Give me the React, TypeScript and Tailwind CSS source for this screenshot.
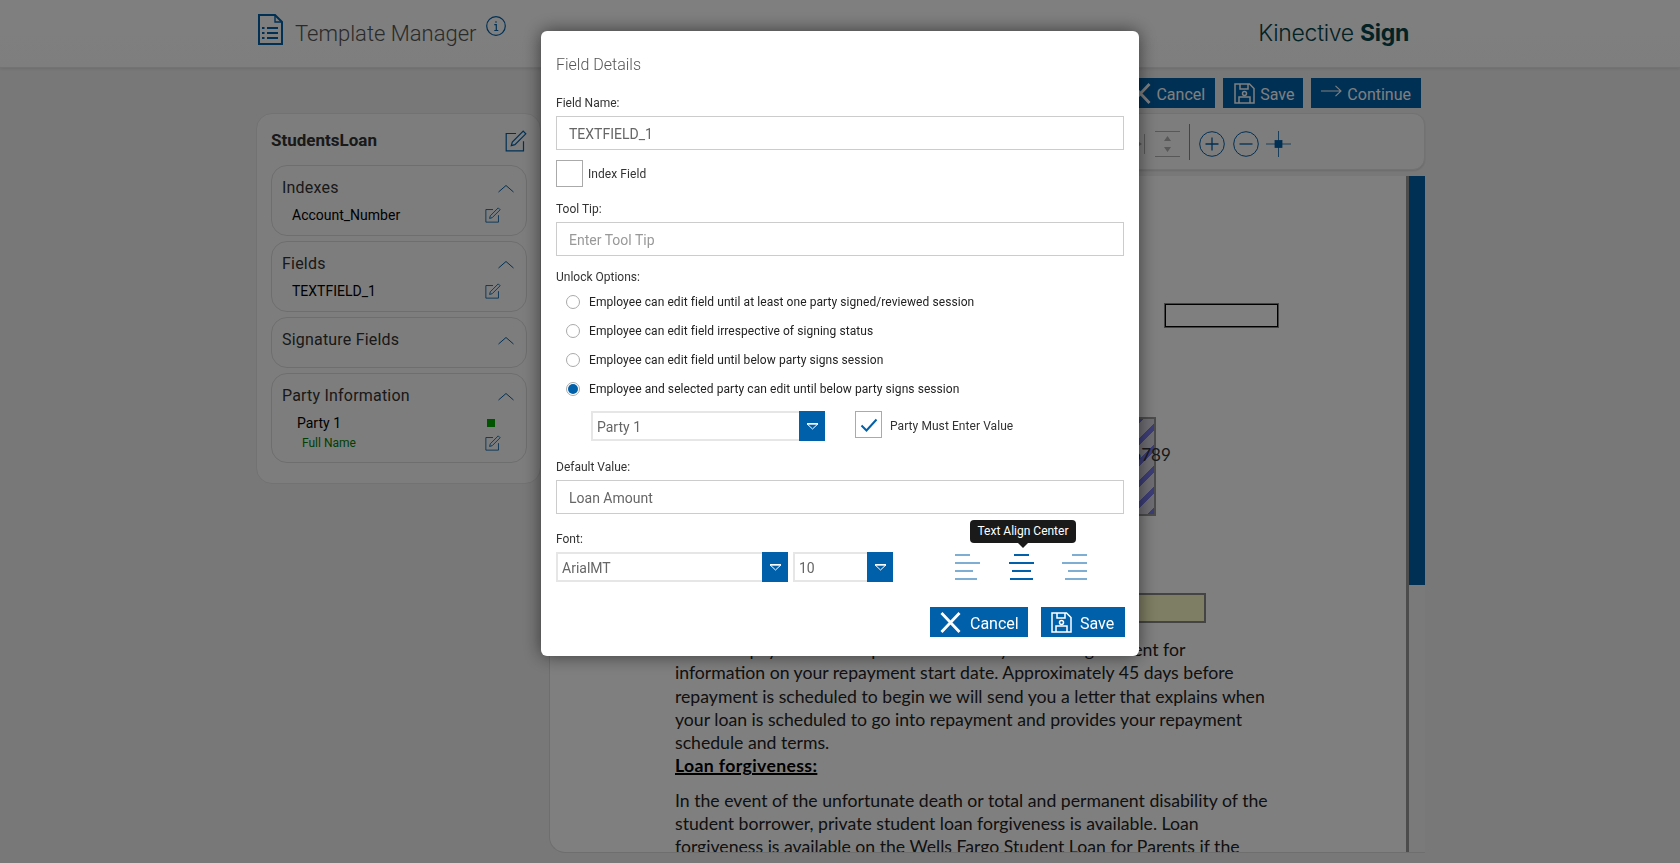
const blue = "#0060a9";

function EditIcon({ size = 16 }: { size?: number }) {
  return (
    <svg width={size} height={size} viewBox="0 0 22 22" fill="none" stroke={blue} strokeWidth="1.2">
      <path d="M11 3.500H1.200v17.300h17.300v-9.600" />
      <path d="M18.200 1.200l2.600 2.600L9.900 14.700l-3.600 1 1-3.600z" />
    </svg>
  );
}

function Chevron() {
  return (
    <svg width="16" height="9" viewBox="0 0 16 9" fill="none" stroke={blue} strokeWidth="1">
      <path d="M.5 8l7.500-6.500L15.500 8" />
    </svg>
  );
}

function CloseIcon({ size = 21 }: { size?: number }) {
  return (
    <svg width={size} height={size} viewBox="0 0 21 21" fill="none" stroke="#fff" strokeWidth="2.800">
      <path d="M1.500 1l18 19M19.500 1l-18 19" />
    </svg>
  );
}

function SaveIcon({ size = 21 }: { size?: number }) {
  return (
    <svg width={size} height={size} viewBox="0 0 21 21" fill="none" stroke="#fff" strokeWidth="1.500">
      <path d="M1 1h14.500L20 5.500V20H1z" />
      <path d="M6 1v5h8V1" />
      <circle cx="10.500" cy="10.500" r="2" />
      <path d="M5 20v-6h11v6" />
    </svg>
  );
}

function ArrowIcon() {
  return (
    <svg width="21" height="12" viewBox="0 0 21 12" fill="none" stroke="#fff" strokeWidth="1.100" className="mb-[4px]">
      <path d="M0 6h20M14.500 .8L20 6l-5.500 5.200" />
    </svg>
  );
}

function ActionButton({ icon, label, className }: { icon: React.ReactNode; label: string; className: string }) {
  return (
    <button type="button" className={`flex h-[30px] items-center bg-[#0060a9] text-base text-white ${className}`}>
      {icon}
      <span className="pt-[3px]">{label}</span>
    </button>
  );
}

function SideCard({ title, height, children }: { title: string; height: string; children?: React.ReactNode }) {
  return (
    <div className={`rounded-2xl border border-[#dcdcdc] px-[10px] pt-[12px] ${height}`}>
      <div className="flex h-5 items-center justify-between pr-[2px] text-base leading-5 tracking-[0.2px] text-[#333]">
        <span>{title}</span>
        <Chevron />
      </div>
      {children}
    </div>
  );
}

function Sidebar() {
  return (
    <aside className="mt-[45px] h-[371px] w-[285px] shrink-0 rounded-2xl border border-[#e4e4e4] bg-[#fbfbfb] pl-[14px] pr-[13px] pt-[15px]">
      <div className="mb-[12px] flex h-6 items-center justify-between">
        <span className="text-[17px] font-bold text-[#333]">StudentsLoan</span>
        <EditIcon size={22} />
      </div>
      <div className="flex flex-col gap-[5px]">
        <SideCard title="Indexes" height="h-[71px]">
          <div className="mt-[7px] flex h-5 items-center justify-between pl-[10px] pr-[15px] text-sm text-black">
            <span>Account_Number</span>
            <EditIcon />
          </div>
        </SideCard>
        <SideCard title="Fields" height="h-[71px]">
          <div className="mt-[7px] flex h-5 items-center justify-between pl-[10px] pr-[15px] text-sm text-black">
            <span>TEXTFIELD_1</span>
            <EditIcon />
          </div>
        </SideCard>
        <SideCard title="Signature Fields" height="h-[51px]" />
        <SideCard title="Party Information" height="h-[90px]">
          <div className="mt-[7px] flex h-5 items-center justify-between pl-[15px] pr-[21px] text-sm text-black">
            <span>Party 1</span>
            <span className="h-2 w-2 bg-[#00a800]" />
          </div>
          <div className="flex h-5 items-center justify-between pl-[20px] pr-[15px] text-xs text-[#008000]">
            <span>Full Name</span>
            <EditIcon />
          </div>
        </SideCard>
      </div>
    </aside>
  );
}

function Toolbar() {
  return (
    <div className="mt-[5px] flex h-[57px] items-center justify-end rounded-xl border border-[#e4e4e4] bg-[#fbfbfb] pr-[133px] pt-[4px] shadow-[0_1px_2px_rgba(0,0,0,0.12)]">
      {/* greyed out alignment tools */}
      <svg width="10" height="20" viewBox="0 0 10 20" fill="#b0b0b0" className="mr-[9px]">
        <path d="M0 6l6 4-6 4z" />
        <rect x="8" y="0" width="1" height="20" />
      </svg>
      <svg width="25" height="26" viewBox="0 0 25 26" fill="#b0b0b0" className="mr-[9px]">
        <rect width="25" height="1" y="0" />
        <rect width="25" height="1" y="25" />
        <path d="M12.500 5l3.500 5H9zM12.500 21L9 16h7z" />
      </svg>
      <span className="mb-[4px] mr-[8px] h-[36px] w-px bg-[#888]" />
      <svg width="26" height="26" viewBox="0 0 26 26" fill="none" stroke={blue} strokeWidth="1" className="ml-px mr-[8px]">
        <circle cx="13" cy="13" r="12.300" />
        <path d="M13 6.500v13M6.500 13h13" strokeWidth="1.300" />
      </svg>
      <svg width="26" height="26" viewBox="0 0 26 26" fill="none" stroke={blue} strokeWidth="1" className="mr-[8px]">
        <circle cx="13" cy="13" r="12.300" />
        <path d="M6.500 13h13" strokeWidth="1.300" />
      </svg>
      <svg width="25" height="26" viewBox="0 0 25 26" fill="none" stroke={blue} strokeWidth=".8" className="-ml-px">
        <path d="M12.500 0v26M0 13h25" />
        <rect x="9" y="9.500" width="7" height="7" fill={blue} />
      </svg>
    </div>
  );
}

const docLines = [
  "Your first payment is due per the terms of your loan agreement for",
  "information on your repayment start date. Approximately 45 days before",
  "repayment is scheduled to begin we will send you a letter that explains when",
  "your loan is scheduled to go into repayment and provides your repayment",
  "schedule and terms.",
];

const docLines2 = [
  "In the event of the unfortunate death or total and permanent disability of the",
  "student borrower, private student loan forgiveness is available. Loan",
  "forgiveness is available on the Wells Fargo Student Loan for Parents if the",
];

function DocumentPanel() {
  return (
    <div className="mt-[6px] flex h-[677px] overflow-hidden rounded-bl-2xl border-b border-l border-[#dcdcdc] bg-white">
      <div className="relative flex-1 overflow-hidden pl-[125px] pt-[462px] text-[17.650px] leading-[23.3px] text-[#222] [font-family:Lato,sans-serif]">
        {/* form fields placed on the PDF page */}
        <div className="absolute left-[615px] top-[128px] h-[23px] w-[113px] border border-black shadow-[0_0_0_1px_#888]" />
        <div className="absolute left-[500px] top-[241px] h-[99px] w-[106px] border-2 border-[#999] bg-[repeating-linear-gradient(135deg,#7c7cf0_0,#7c7cf0_5px,#dcdce8_5px,#dcdce8_15px)]" />
        <div className="absolute left-[532px] top-[267px] text-[17px] leading-6 text-[#333]">123456789</div>
        <div className="absolute left-[480px] top-[417px] h-[30px] w-[176px] border-2 border-[#888] bg-[#fdfdc8]" />
        {docLines.map((line) => (
          <div key={line} className="whitespace-nowrap">{line}</div>
        ))}
        <div className="mb-[11px] whitespace-nowrap font-bold tracking-[0.35px] text-black underline decoration-2">Loan forgiveness:</div>
        {docLines2.map((line) => (
          <div key={line} className="whitespace-nowrap">{line}</div>
        ))}
      </div>
      <div className="w-[19px] shrink-0 border-l-[3px] border-[#999] bg-[#f5f5f5]">
        <div className="h-[409px] w-[16px] bg-[#0060a9]" />
      </div>
    </div>
  );
}

function Page() {
  return (
    <div className="h-[863px] overflow-hidden bg-[#f1f1f1] [font-family:Roboto,sans-serif]">
      <header className="flex h-[68px] items-center justify-between border-b border-[#e6e6e6] bg-[linear-gradient(#ffffff,#fdfdfd)] pl-[258px] pr-[271px] shadow-[0_1px_3px_rgba(0,0,0,0.1)]">
        <div className="flex items-center">
          <svg width="25" height="31" viewBox="0 0 25 31" fill="none" stroke={blue} strokeWidth="2" className="mb-[8px]">
            <path d="M1 1h16l7 7v22H1z" />
            <path d="M17 1v7h7" strokeWidth="1.400" />
            <path d="M9 14h11M9 19h11M9 24h11M4 14h2.500M4 19h2.500M4 24h2.500" strokeWidth="1.800" />
          </svg>
          <span className="ml-[12px] text-[22px] font-light text-[#555]">Template Manager</span>
          <svg width="20" height="20" viewBox="0 0 20 20" fill="none" stroke={blue} strokeWidth="1.200" className="mb-[15px] ml-[10px]">
            <circle cx="10" cy="10" r="9.300" />
            <path d="M8.300 8.700H10.300V14.500M8.300 14.500h4M10 5.200v1.600" />
          </svg>
        </div>
        <div className="text-[23px] font-light tracking-[-0.3px] text-[#05454a] [font-family:Inter,sans-serif]">
          Kinective <span className="font-bold">Sign</span>
        </div>
      </header>
      <main className="flex gap-[8px] pl-[256px] pr-[255px]">
        <Sidebar />
        <div className="min-w-0 flex-1">
          <div className="mt-[10px] flex justify-end gap-[8px] pr-[4px]">
            <ActionButton icon={<CloseIcon />} label="Cancel" className="gap-[5px] pl-[14px] pr-[10px]" />
            <ActionButton icon={<SaveIcon />} label="Save" className="gap-[5px] pl-[11px] pr-[9px]" />
            <ActionButton icon={<ArrowIcon />} label="Continue" className="gap-[5px] pl-[10px] pr-[10px]" />
          </div>
          <Toolbar />
          <DocumentPanel />
        </div>
      </main>
    </div>
  );
}

function Label({ children, className = "" }: { children: React.ReactNode; className?: string }) {
  return <div className={`h-[14px] text-xs leading-[14px] text-[#333] ${className}`}>{children}</div>;
}

function TextInput({ value, placeholder }: { value?: string; placeholder?: string }) {
  return (
    <input
      readOnly
      value={value ?? ""}
      placeholder={placeholder}
      className="mt-[6px] block h-[34px] w-[568px] border border-[#ccc] px-[12px] pt-px text-sm text-[#666] outline-none placeholder:text-[#999]"
    />
  );
}

function Caret() {
  return (
    <svg width="13" height="7" viewBox="0 0 13 7" fill="none" stroke="#fff">
      <path d="M1 .8h11L6.500 6z" strokeWidth="1" />
      <path d="M1 .8h11" strokeWidth="1.500" />
    </svg>
  );
}

function SelectBox({ value, width, pad }: { value: string; width: string; pad: string }) {
  return (
    <div className={`flex h-[30px] items-stretch ${width}`}>
      <div className={`flex flex-1 items-center border-2 border-r-0 border-[#e6e6e6] pt-px text-sm text-[#666] ${pad}`}>{value}</div>
      <div className="flex w-[26px] items-center justify-center bg-[#0060a9]">
        <Caret />
      </div>
    </div>
  );
}

function Radio({ label, checked = false }: { label: string; checked?: boolean }) {
  return (
    <div className="flex h-[29px] items-center text-xs tracking-[0.07px] text-[#222]">
      <span className="ml-[10px] mr-[9px] flex h-[14px] w-[14px] items-center justify-center rounded-full border border-[#aaa]">
        {checked && <span className="h-[10px] w-[10px] rounded-full bg-[#0060a9]" />}
      </span>
      {label}
    </div>
  );
}

function AlignIcon({ lines, active = false }: { lines: string[]; active?: boolean }) {
  return (
    <div className={`flex w-[25px] flex-col gap-[5.700px] ${active ? "" : "opacity-50"}`}>
      {lines.map((cls, i) => (
        <span key={i} className={`block h-[2px] bg-[#0060a9] ${cls}`} />
      ))}
    </div>
  );
}

function FieldDetails() {
  return (
    <div className="fixed inset-0 flex justify-center bg-black/50 pt-[31px] [font-family:Roboto,sans-serif]">
      <div className="h-[625px] w-[598px] rounded-md bg-white pl-[15px] pr-[14px] pt-[24px] shadow-[0_0_18px_rgba(0,0,0,0.55)]">
        <div className="h-5 text-base font-light leading-5 text-[#555]">Field Details</div>
        <Label className="mt-[21px]">Field Name:</Label>
        <TextInput value="TEXTFIELD_1" />

        <div className="mt-[10px] flex items-center text-xs tracking-[0.07px] text-[#333]">
          <span className="mr-[5px] h-[27px] w-[27px] border border-[#aaa]" />
          Index Field
        </div>

        <Label className="mt-[15px]">Tool Tip:</Label>
        <TextInput placeholder="Enter Tool Tip" />

        <Label className="mt-[14px]">Unlock Options:</Label>
        <div className="mt-[3px]">
          <Radio label="Employee can edit field until at least one party signed/reviewed session" />
          <Radio label="Employee can edit field irrespective of signing status" />
          <Radio label="Employee can edit field until below party signs session" />
          <Radio label="Employee and selected party can edit until below party signs session" checked />
        </div>

        <div className="ml-[35px] mt-[8px] flex items-start">
          <SelectBox value="Party 1" width="w-[234px]" pad="pl-[4px]" />
          <span className="ml-[30px] flex h-[27px] w-[27px] items-center justify-center border border-[#aaa]">
            <svg width="18" height="14" viewBox="0 0 18 14" fill="none" stroke={blue} strokeWidth="2">
              <path d="M1.500 7.500l5 5L16.500 1.500" />
            </svg>
          </span>
          <span className="ml-[8px] flex h-[30px] items-center text-xs tracking-[0.07px] text-[#333]">Party Must Enter Value</span>
        </div>

        <Label className="mt-[19px]">Default Value:</Label>
        <TextInput value="Loan Amount" />

        <Label className="mt-[18px]">Font:</Label>
        <div className="mt-[6px] flex items-center">
          <SelectBox value="ArialMT" width="w-[232px]" pad="pl-[4px]" />
          <div className="ml-[5px]">
            <SelectBox value="10" width="w-[100px]" pad="pl-[4px]" />
          </div>
          <div className="relative ml-[62px] flex gap-[28.500px]">
            <AlignIcon lines={["w-[15px]", "w-full", "w-[18px]", "w-[22px]"]} />
            <AlignIcon lines={["mx-auto w-[15px]", "w-full", "mx-auto w-[19px]", "mx-auto w-[23px]"]} active />
            <AlignIcon lines={["ml-auto w-[15px]", "w-full", "ml-auto w-[19px]", "ml-auto w-[22px]"]} />
            {/* tooltip over the centre button */}
            <div className="absolute left-[15px] top-[-34px] flex h-[23px] w-[106px] items-center justify-center rounded-[4px] bg-[#1a1a1a] pb-px text-xs text-white">
              Text Align Center
              <span className="absolute left-1/2 top-full h-0 w-0 -translate-x-1/2 border-x-[5px] border-t-[5px] border-x-transparent border-t-[#1a1a1a]" />
            </div>
          </div>
        </div>

        <div className="mt-[25px] flex justify-end gap-[13px]">
          <ActionButton icon={<CloseIcon />} label="Cancel" className="w-[98px] gap-[9px] pl-[10px]" />
          <ActionButton icon={<SaveIcon />} label="Save" className="w-[84px] gap-[8px] pl-[10px]" />
        </div>
      </div>
    </div>
  );
}

export default function App() {
  return (
    <>
      <Page />
      <FieldDetails />
    </>
  );
}
